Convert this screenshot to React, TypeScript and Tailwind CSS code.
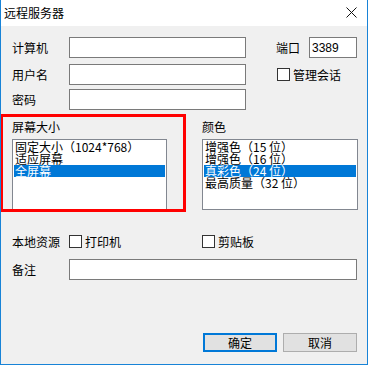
import React from "react";

const font = { fontFamily: '"Noto Sans CJK SC", "Noto Sans", sans-serif' };

function TextBox({ className = "", children }: { className?: string; children?: React.ReactNode }) {
  return (
    <div className={`h-[21px] bg-white border border-[#7a7a7a] flex items-center ${className}`}>
      {children}
    </div>
  );
}

function CheckBox({ label }: { label: string }) {
  return (
    <div className="flex items-center">
      <div className="w-[13px] h-[13px] bg-white border border-[#333333]" />
      <span className="ml-[3px] text-[12px] leading-[13px] text-black">{label}</span>
    </div>
  );
}

function ListBox({ items, selected, className = "" }: { items: string[]; selected: number; className?: string }) {
  return (
    <div className={`h-[71px] bg-white border border-[#828790] pt-[1px] px-[1px] ${className}`}>
      {items.map((it, i) => (
        <div
          key={it}
          className={`h-[12px] leading-[12px] text-[12px] pl-[1px] whitespace-nowrap ${
            i === selected ? "bg-[#0078d7] text-white" : "text-black"
          }`}
        >
          {it}
        </div>
      ))}
    </div>
  );
}

export default function App() {
  return (
    <div
      className="relative w-[368px] h-[365px] flex flex-col border-x border-b border-[#1883d7] bg-[#f0f0f0] overflow-hidden text-black"
      style={font}
    >
      {/* title bar */}
      <div className="h-[26px] bg-white flex items-center justify-between pl-[3px] pr-[10px]">
        <span className="text-[12px] leading-[14px] mb-[1px]">远程服务器</span>
        <svg width="11" height="11" viewBox="0 0 11 11" className="mb-[1px]">
          <path d="M0.5 0.5 L10.5 10.5 M10.5 0.5 L0.5 10.5" stroke="#111" strokeWidth="1" />
        </svg>
      </div>

      {/* body */}
      <div className="flex-1 pl-[11px] pt-[11px] text-[12px]">
        <div className="flex items-center h-[21px]">
          <span className="w-[57px]">计算机</span>
          <TextBox className="w-[177px]" />
          <span className="ml-[30px] w-[33px]">端口</span>
          <TextBox className="w-[48px]">
            <span className="pl-[2px] text-[12px]" style={{ fontFamily: '"Liberation Sans", Arial, sans-serif' }}>
              3389
            </span>
          </TextBox>
        </div>

        <div className="flex items-center h-[21px] mt-[6px]">
          <span className="w-[57px]">用户名</span>
          <TextBox className="w-[177px]" />
          <div className="ml-[31px]">
            <CheckBox label="管理会话" />
          </div>
        </div>

        <div className="flex items-center h-[21px] mt-[4px]">
          <span className="w-[57px]">密码</span>
          <TextBox className="w-[177px]" />
        </div>

        <div className="flex">
          <div className="w-[155px]">
            <div className="h-[16px] leading-[16px] mt-[9px]">屏幕大小</div>
            <ListBox
              className="mt-[4px]"
              items={["固定大小（1024*768）", "适应屏幕", "全屏幕"]}
              selected={2}
            />
          </div>
          <div className="w-[156px] ml-[35px]">
            <div className="h-[16px] leading-[16px] mt-[9px]">颜色</div>
            <ListBox
              className="mt-[4px]"
              items={["增强色（15 位）", "增强色（16 位）", "真彩色（24 位）", "最高质量（32 位）"]}
              selected={2}
            />
          </div>
        </div>

        <div className="flex items-center h-[13px] mt-[25px]">
          <span className="w-[57px]">本地资源</span>
          <div className="w-[133px]">
            <CheckBox label="打印机" />
          </div>
          <CheckBox label="剪贴板" />
        </div>

        <div className="flex items-center h-[21px] mt-[11px]">
          <span className="w-[57px]">备注</span>
          <TextBox className="w-[288px]" />
        </div>

        <div className="flex mt-[53px] ml-[191px] gap-[6px]">
          <button className="w-[74px] h-[19px] bg-[#e1e1e1] border-2 border-[#0078d7] text-[12px] leading-[15px] flex items-center justify-center">
            确定
          </button>
          <button className="w-[74px] h-[19px] bg-[#e1e1e1] border border-[#adadad] text-[12px] leading-[17px] flex items-center justify-center">
            取消
          </button>
        </div>
      </div>

      {/* red highlight annotation */}
      <div className="absolute left-[-1px] top-[114px] w-[186px] h-[98px] border-[3px] border-[#ff0000] pointer-events-none" />
    </div>
  );
}
